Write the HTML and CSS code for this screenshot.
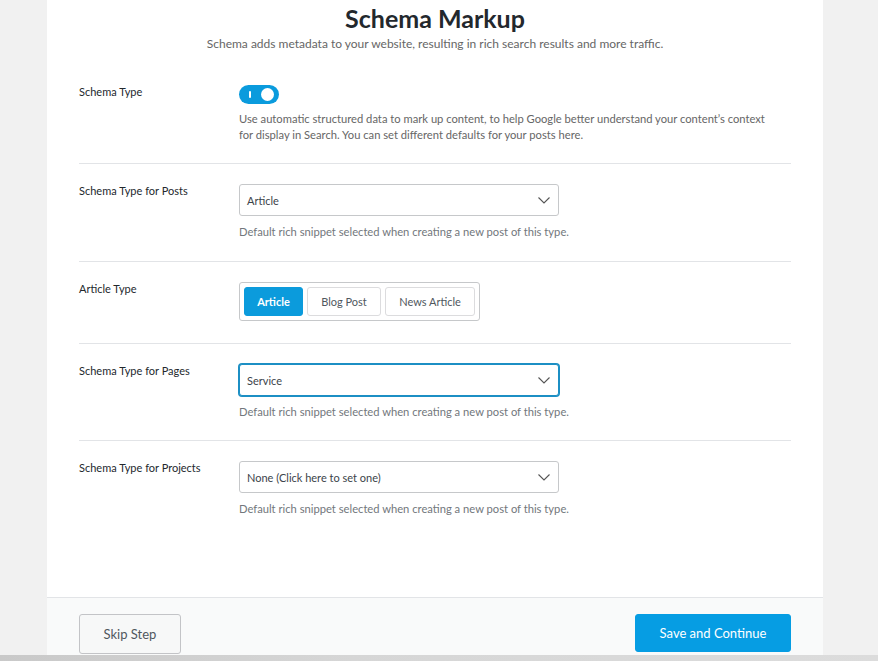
FILE: index.html
```html
<!DOCTYPE html>
<html lang="en">
<head>
<meta charset="utf-8">
<title>Schema Markup</title>
<link rel="stylesheet" href="styles.css">
</head>
<body>
<div class="page">
  <div class="card">
    <div class="card-body">
      <h1 class="title">Schema Markup</h1>
      <p class="subtitle">Schema adds metadata to your website, resulting in rich search results and more traffic.</p>

      <div class="row">
        <div class="label">Schema Type</div>
        <div class="control">
          <span class="toggle"><span class="toggle-mark"></span><span class="toggle-knob"></span></span>
          <p class="desc">Use automatic structured data to mark up content, to help Google better understand your content’s context for display in Search. You can set different defaults for your posts here.</p>
        </div>
      </div>

      <div class="row row-tall">
        <div class="label">Schema Type for Posts</div>
        <div class="control">
          <div class="select"><span>Article</span><svg class="chev" width="12" height="7" viewBox="0 0 12 7"><path d="M0.5 0.5 L6 6 L11.5 0.5" fill="none" stroke="#555" stroke-width="1.1"/></svg></div>
          <p class="help">Default rich snippet selected when creating a new post of this type.</p>
        </div>
      </div>

      <div class="row row-group">
        <div class="label">Article Type</div>
        <div class="control">
          <div class="btn-group">
            <span class="seg seg-active">Article</span>
            <span class="seg">Blog Post</span>
            <span class="seg">News Article</span>
          </div>
        </div>
      </div>

      <div class="row">
        <div class="label">Schema Type for Pages</div>
        <div class="control">
          <div class="select select-focus"><span>Service</span><svg class="chev" width="12" height="7" viewBox="0 0 12 7"><path d="M0.5 0.5 L6 6 L11.5 0.5" fill="none" stroke="#555" stroke-width="1.1"/></svg></div>
          <p class="help">Default rich snippet selected when creating a new post of this type.</p>
        </div>
      </div>

      <div class="row row-last">
        <div class="label">Schema Type for Projects</div>
        <div class="control">
          <div class="select"><span>None (Click here to set one)</span><svg class="chev" width="12" height="7" viewBox="0 0 12 7"><path d="M0.5 0.5 L6 6 L11.5 0.5" fill="none" stroke="#555" stroke-width="1.1"/></svg></div>
          <p class="help">Default rich snippet selected when creating a new post of this type.</p>
        </div>
      </div>
    </div>
    <div class="card-footer">
      <button class="btn btn-skip">Skip Step</button>
      <button class="btn btn-save">Save and Continue</button>
    </div>
  </div>
</div>
<div class="hbar"></div>
</body>
</html>
```

FILE: styles.css
```css
html, body {
  margin: 0;
  padding: 0;
}
body {
  background: #f1f1f1;
  font-family: Lato, "Noto Sans", Arial, sans-serif;
  color: #23282d;
  height: 661px;
  overflow: hidden;
}
.page {
  height: 655px;
  overflow: hidden;
}
.card {
  margin-left: 47px;
  width: 776px;
  height: 655px;
  background: #fff;
  display: flex;
  flex-direction: column;
}
.card-body {
  height: 597px;
  padding: 3px 32px 0;
  box-sizing: border-box;
}
.title {
  margin: 0;
  font-size: 25px;
  line-height: 30px;
  font-weight: 700;
  text-align: center;
  color: #23282d;
}
.subtitle {
  margin: 3px 0 13px;
  font-size: 12px;
  line-height: 16px;
  color: #666;
  text-align: center;
}
.row {
  display: grid;
  grid-template-columns: 160px 1fr;
  padding: 19px 0 20px;
  border-bottom: 1px solid #e2e4e7;
}
.row-tall {
  padding-bottom: 21px;
}
.row-group {
  padding-bottom: 22px;
}
.row-last {
  border-bottom: none;
}
.label {
  font-size: 11px;
  line-height: 16px;
  color: #23282d;
}
.control {
  padding-top: 1px;
}
.toggle {
  position: relative;
  display: block;
  width: 40px;
  height: 19px;
  border-radius: 10px;
  background: #0a9bdd;
}
.toggle-mark {
  position: absolute;
  left: 10px;
  top: 6px;
  width: 2px;
  height: 7px;
  background: #fff;
  border-radius: 1px;
}
.toggle-knob {
  position: absolute;
  right: 5px;
  top: 3px;
  width: 13px;
  height: 13px;
  border-radius: 50%;
  background: #fff;
}
.desc {
  margin: 7px 0 0;
  font-size: 11.2px;
  line-height: 16px;
  color: #666;
  max-width: 535px;
}
.select {
  box-sizing: border-box;
  width: 320px;
  height: 32px;
  border: 1px solid #c6c8ca;
  border-radius: 3px;
  display: flex;
  align-items: center;
  justify-content: space-between;
  padding: 0 8px 0 7px;
  font-size: 11px;
  color: #3c434a;
  background: #fff;
}
.select-focus {
  border-color: #1c8fc4;
  box-shadow: 0 0 0 1px #1c8fc4;
}
.chev {
  display: block;
}
.help {
  margin: 8px 0 0;
  font-size: 11.2px;
  line-height: 16px;
  color: #72777c;
}
.btn-group {
  display: inline-flex;
  gap: 4px;
  padding: 4px;
  border: 1px solid #c6c8ca;
  border-radius: 3px;
}
.seg {
  box-sizing: border-box;
  height: 29px;
  display: flex;
  align-items: center;
  justify-content: center;
  border: 1px solid #dcdcde;
  border-radius: 3px;
  font-size: 11px;
  color: #50575e;
  background: #fff;
}
.seg:nth-child(1) { width: 59px; }
.seg:nth-child(2) { width: 74px; }
.seg:nth-child(3) { width: 90px; }
.seg-active {
  background: #0b9bdc;
  border-color: #0b9bdc;
  color: #fff;
  font-weight: 700;
}
.card-footer {
  flex: 1;
  border-top: 1px solid #e2e4e7;
  background: #f9fafa;
  display: flex;
  justify-content: space-between;
  align-items: flex-start;
  padding: 16px 32px 0;
}
.btn {
  box-sizing: border-box;
  height: 40px;
  border-radius: 3px;
  font-family: inherit;
  font-size: 13px;
  cursor: pointer;
}
.btn-skip {
  width: 102px;
  background: #f7f8f8;
  border: 1px solid #c3c4c7;
  color: #50575e;
}
.btn-save {
  width: 156px;
  height: 38px;
  background: #069de3;
  border: 1px solid #069de3;
  color: #fff;
}
.hbar {
  height: 6px;
  background: linear-gradient(90deg, #c9c9c9 0%, #d6d6d6 40%, #dcdcdc 100%);
}
```
